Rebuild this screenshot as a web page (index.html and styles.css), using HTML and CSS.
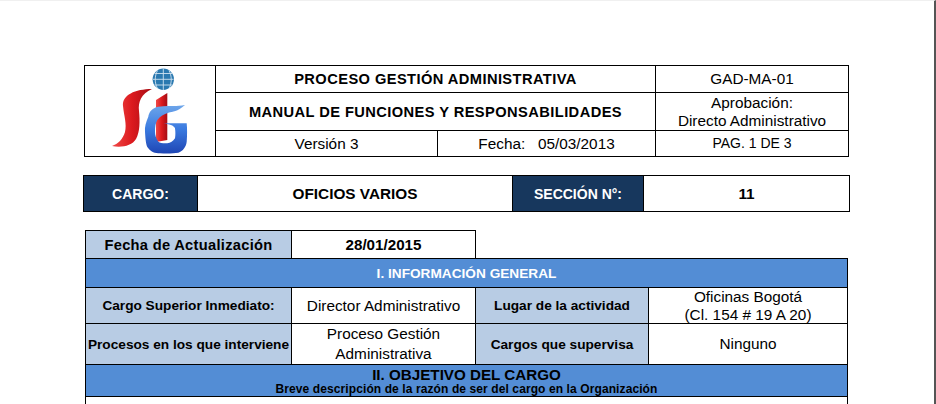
FILE: index.html
```html
<!DOCTYPE html>
<html lang="es">
<head>
    <meta charset="UTF-8">
    <meta name="viewport" content="width=device-width, initial-scale=1.0">
    <title>Manual de Funciones y Responsabilidades</title>
    <link rel="stylesheet" href="styles.css">
</head>
<body>
    <!-- Encabezado del documento -->
    <table class="tabla encabezado">
        <colgroup>
            <col class="enc-logo"><col class="enc-a"><col class="enc-b"><col class="enc-c">
        </colgroup>
        <tr class="fila-27">
            <td class="logo" rowspan="3">
                <svg class="logo-svg" viewBox="0 0 130 90" role="img" aria-label="Logo SG">
                    <defs>
                        <linearGradient id="rojo" x1="0" y1="0" x2="1" y2="0">
                            <stop offset="0" stop-color="#f04a48"/>
                            <stop offset="0.5" stop-color="#dc1a1e"/>
                            <stop offset="1" stop-color="#a50d14"/>
                        </linearGradient>
                        <linearGradient id="azul" x1="0" y1="0" x2="0" y2="1">
                            <stop offset="0" stop-color="#6ea6ea"/>
                            <stop offset="0.5" stop-color="#3a7ae0"/>
                            <stop offset="1" stop-color="#1f46b4"/>
                        </linearGradient>
                    </defs>
                    <circle cx="78.3" cy="13.3" r="10.7" fill="#2b79b0"/>
                    <path d="M68 13.3h20.6M69.500 7.500h17.600M69.500 19h17.600M78.300 2.600v21.400M72.500 4.500c-3 5.500-3 12.500 0 18M84 4.500c3 5.500 3 12.500 0 18" fill="none" stroke="#cfe2f0" stroke-width="0.9"/>
                    <path d="M67 23C50 23 37 29 38 40C39 50 42 58 40 66C38 73 33 78 27 80C36 82 47 80 51 73C55 66 55 55 54 45C53 36 56 28 67 23Z" fill="url(#rojo)"/>
                    <path d="M71 34L82.300 27V74L71 76Z" fill="url(#rojo)"/>
                    <path d="M100 39C90 41 82 39 73.300 40.700C67 42 64 46 63.300 50.700C61 56 59.500 61 60 65.700C60.500 74 61 80 63.300 82.300C66 86 70 87.300 75 87.300C82 87.800 89 87.500 93.300 86.700C98 85 101 81 101.700 75.700C102.200 69 102.200 63 101.700 57.300H78.300C84 58 89 59.500 90 62.300C90.500 66 90.500 69 90 72.300C88 75.500 85.500 77 82.300 77.300C78 77.500 75 77 73.300 75.700C71 72.500 70 69 70 65.700C70 61 70.500 57 72.300 54C75 50 79 48 83.300 46.700C88 45.500 92 46 100 39Z" fill="url(#azul)"/>
                </svg>
            </td>
            <td class="titulo" colspan="2">PROCESO GESTIÓN ADMINISTRATIVA</td>
            <td class="normal">GAD-MA-01</td>
        </tr>
        <tr class="fila-38">
            <td class="titulo" colspan="2">MANUAL DE FUNCIONES Y RESPONSABILIDADES</td>
            <td class="normal">Aprobación:<br>Directo Administrativo</td>
        </tr>
        <tr class="fila-26">
            <td class="normal">Versión 3</td>
            <td class="normal">Fecha:&nbsp;&nbsp; 05/03/2013</td>
            <td class="normal pagina">PAG. 1 DE 3</td>
        </tr>
    </table>

    <!-- Cargo y sección -->
    <table class="tabla cargo">
        <colgroup>
            <col class="car-a"><col class="car-b"><col class="car-c"><col class="car-d">
        </colgroup>
        <tr class="fila-36">
            <td class="oscuro">CARGO:</td>
            <td class="titulo-cargo">OFICIOS VARIOS</td>
            <td class="oscuro">SECCIÓN N°:</td>
            <td class="titulo-cargo">11</td>
        </tr>
    </table>

    <!-- Información general -->
    <table class="tabla info">
        <colgroup>
            <col class="inf-a"><col class="inf-b"><col class="inf-c"><col class="inf-d">
        </colgroup>
        <tr class="fila-28">
            <td class="claro fecha">Fecha de Actualización</td>
            <td class="fecha-valor">28/01/2015</td>
            <td class="vacio" colspan="2"></td>
        </tr>
        <tr class="fila-29">
            <td class="seccion" colspan="4">I. INFORMACIÓN GENERAL</td>
        </tr>
        <tr class="fila-36">
            <td class="claro">Cargo Superior Inmediato:</td>
            <td class="normal">Director Administrativo</td>
            <td class="claro">Lugar de la actividad</td>
            <td class="normal">Oficinas Bogotá<br>(Cl. 154 # 19 A 20)</td>
        </tr>
        <tr class="fila-41">
            <td class="claro">Procesos en los que interviene</td>
            <td class="normal abierto">Proceso Gestión<br>Administrativa</td>
            <td class="claro">Cargos que supervisa</td>
            <td class="normal">Ninguno</td>
        </tr>
        <tr class="fila-32">
            <td class="objetivo" colspan="4">
                <div class="objetivo-titulo">II. OBJETIVO DEL CARGO</div>
                <div class="objetivo-sub">Breve descripción de la razón de ser del cargo en la Organización</div>
            </td>
        </tr>
        <tr class="fila-7">
            <td class="cierre" colspan="4"></td>
        </tr>
    </table>
</body>
</html>
```

FILE: styles.css
```css
html {
    overflow: hidden;
}
body {
    font-family: "Liberation Sans", Arial, sans-serif;
    margin: 0;
    height: 403px;
    overflow: hidden;
    background-color: #fff;
    color: #000;
    border-top: 1px solid #f0f0f0;
    border-right: 2px solid #555;
}
.tabla {
    border-collapse: collapse;
    table-layout: fixed;
}
.tabla td {
    border: 1px solid #000;
    padding: 0;
    text-align: center;
    vertical-align: middle;
    overflow: hidden;
    white-space: nowrap;
}
/* Encabezado */
.encabezado {
    width: 765px;
    margin: 64px 0 0 84px;
}
.enc-logo { width: 131px; }
.enc-a { width: 222px; }
.enc-b { width: 218px; }
.enc-c { width: 193px; }
.logo {
    padding: 0;
    line-height: 0;
}
.logo-svg {
    width: 130px;
    height: 90px;
}
.titulo {
    font-size: 14.67px;
    font-weight: bold;
    letter-spacing: 0.42px;
}
.normal {
    font-size: 15.33px;
    line-height: 17.5px;
}
.tabla .abierto {
    line-height: 20px;
}
.pagina {
    font-size: 14px;
}
/* Cargo */
.cargo {
    width: 767px;
    margin: 18px 0 0 83px;
}
.car-a { width: 114px; }
.car-b { width: 315px; }
.car-c { width: 131px; }
.car-d { width: 206px; }
.oscuro {
    background-color: #17375d;
    color: #fff;
    font-size: 14px;
    font-weight: bold;
}
.titulo-cargo {
    font-size: 15.33px;
    font-weight: bold;
}
/* Informacion general */
.info {
    width: 763px;
    margin: 18px 0 0 85px;
}
.inf-a { width: 206px; }
.inf-b { width: 184px; }
.inf-c { width: 173px; }
.inf-d { width: 199px; }
.claro {
    background-color: #b8cce4;
    font-size: 13.67px;
    font-weight: bold;
}
.fecha {
    font-size: 14.67px;
    letter-spacing: 0.3px;
}
.fecha-valor {
    font-size: 15.2px;
    font-weight: bold;
}
.tabla .vacio {
    border-top: 0;
    border-right: 0;
}
.seccion {
    background-color: #538dd5;
    color: #fff;
    font-size: 13.67px;
    font-weight: bold;
}
.objetivo {
    background-color: #538dd5;
    font-weight: bold;
}
.objetivo-titulo {
    font-size: 15.2px;
    line-height: 17px;
}
.objetivo-sub {
    font-size: 12px;
    line-height: 13px;
    letter-spacing: 0.1px;
}
.tabla .cierre {
    border-bottom: 0;
}
/* Alturas de fila */
.fila-7 { height: 7px; }
.fila-26 { height: 26px; }
.fila-27 { height: 27px; }
.fila-28 { height: 28px; }
.fila-29 { height: 29px; }
.fila-32 { height: 32px; }
.fila-36 { height: 36px; }
.fila-38 { height: 38px; }
.fila-41 { height: 41px; }
```
